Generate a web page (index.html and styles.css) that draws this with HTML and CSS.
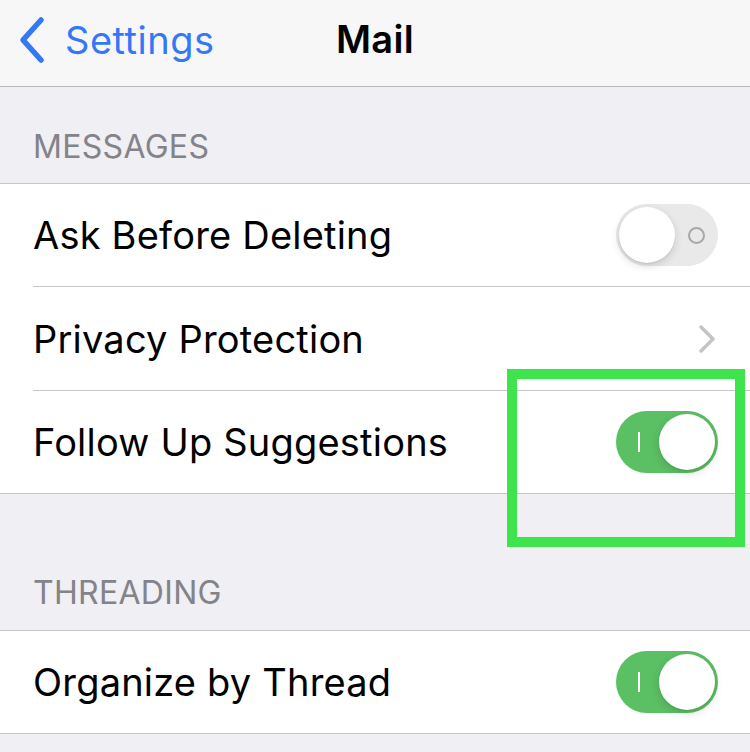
FILE: index.html
```html
<!DOCTYPE html>
<html>
<head>
<meta charset="utf-8">
<link rel="stylesheet" href="styles.css">
</head>
<body>
<div class="screen">
  <header class="navbar">
    <a class="back">
      <svg class="back-chevron" width="28" height="48" viewBox="0 0 28 48"><path d="M23 4 L5 24 L23 44" fill="none" stroke="#3478f6" stroke-width="5.5" stroke-linecap="round" stroke-linejoin="round"/></svg>
      <span>Settings</span>
    </a>
    <h1 class="title">Mail</h1>
  </header>

  <div class="section-header">MESSAGES</div>
  <ul class="group">
    <li class="row">
      <span class="label">Ask Before Deleting</span>
      <span class="switch off"><span class="mark-o"></span><span class="thumb"></span></span>
    </li>
    <li class="row">
      <span class="label">Privacy Protection</span>
      <svg class="disclosure" width="20" height="30" viewBox="0 0 20 30"><path d="M4 3 L16 15 L4 27" fill="none" stroke="#c4c4c7" stroke-width="3.5" stroke-linecap="round" stroke-linejoin="round"/></svg>
    </li>
    <li class="row">
      <span class="label">Follow Up Suggestions</span>
      <span class="switch on"><span class="mark-i"></span><span class="thumb"></span></span>
    </li>
  </ul>

  <div class="section-header spaced">THREADING</div>
  <ul class="group">
    <li class="row">
      <span class="label">Organize by Thread</span>
      <span class="switch on"><span class="mark-i"></span><span class="thumb"></span></span>
    </li>
  </ul>

  <div class="highlight"></div>
</div>
</body>
</html>
```
FILE: styles.css
```css
* { box-sizing: border-box; }

html, body {
  margin: 0;
  padding: 0;
  background: #efeff4;
}

.screen {
  position: relative;
  width: 750px;
  height: 752px;
  overflow: hidden;
  font-family: Inter, "Liberation Sans", sans-serif;
  color: #000;
}

.navbar {
  height: 87px;
  background: #f7f7f8;
  border-bottom: 1px solid #b9b9bd;
  display: flex;
  align-items: center;
  position: relative;
  padding-left: 18px;
}

.back {
  display: flex;
  align-items: center;
  gap: 19px;
  color: #3478f6;
  font-size: 38px;
  letter-spacing: 0.5px;
  margin-top: -6px;
}

.back-chevron { display: block; }

.title {
  position: absolute;
  left: 0;
  right: 0;
  top: 17px;
  margin: 0;
  text-align: center;
  font-size: 38px;
  font-weight: 600;
  line-height: 44px;
  letter-spacing: 0.3px;
}

.section-header {
  color: #838388;
  font-size: 32px;
  letter-spacing: 0.3px;
  line-height: 32px;
  padding: 0 0 20px 33px;
  height: 96px;
  display: flex;
  align-items: flex-end;
}

.section-header.spaced {
  height: 136px;
  padding-bottom: 21px;
}

.group {
  list-style: none;
  margin: 0;
  padding: 0;
  background: #fff;
  border-top: 1px solid #c6c6c8;
  border-bottom: 1px solid #c6c6c8;
}

.row {
  height: 103px;
  margin-left: 33px;
  padding-right: 32px;
  display: flex;
  align-items: center;
  justify-content: space-between;
  border-bottom: 1px solid #c6c6c8;
}

.row:nth-child(2) { height: 104px; }

.row:last-child {
  height: 102px;
  border-bottom: none;
}

.label {
  font-size: 38px;
  letter-spacing: 0.2px;
}

.disclosure { margin-right: 1px; }

.switch {
  position: relative;
  width: 102px;
  height: 62px;
  border-radius: 31px;
  flex: none;
}

.switch.off { background: #e9e9ea; }
.switch.on { background: #5bbf63; }

.switch .thumb {
  position: absolute;
  top: 3px;
  width: 56px;
  height: 56px;
  border-radius: 50%;
  background: #fff;
  box-shadow: 0 3px 8px rgba(0, 0, 0, 0.15), 0 1px 1px rgba(0, 0, 0, 0.08);
}

.switch.off .thumb { left: 3px; }
.switch.on .thumb { right: 3px; }

.mark-o {
  position: absolute;
  right: 13px;
  top: 23px;
  width: 17px;
  height: 17px;
  border-radius: 50%;
  border: 2px solid #a8a8ab;
}

.mark-i {
  position: absolute;
  left: 22px;
  top: 21px;
  width: 2px;
  height: 20px;
  background: #fff;
}

.highlight {
  position: absolute;
  left: 507px;
  top: 369px;
  width: 238px;
  height: 178px;
  border: 10px solid #3de44b;
}
```
